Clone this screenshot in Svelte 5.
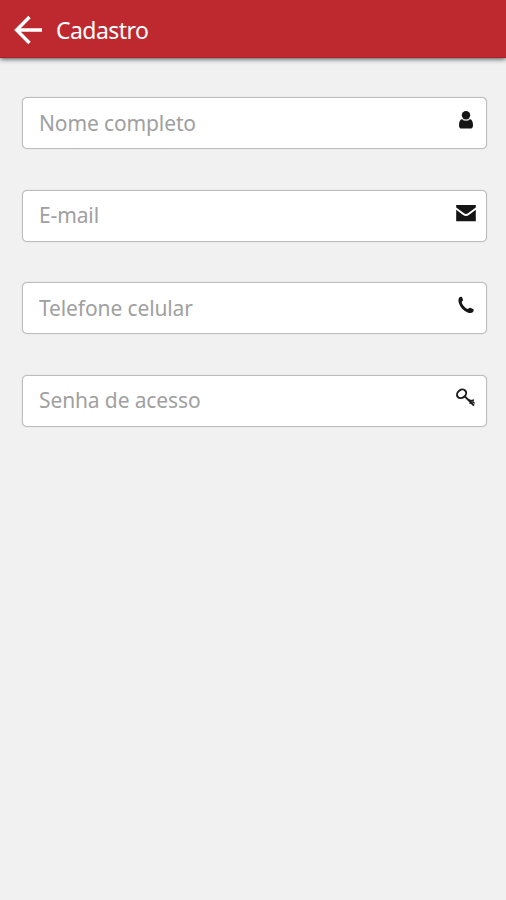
<script lang="ts">
    type Field = { id: string; type: string; label: string; icon: string };

    const fields: Field[] = [
        { id: 'name', type: 'text', label: 'Nome completo', icon: 'user' },
        { id: 'email', type: 'email', label: 'E-mail', icon: 'envelope' },
        { id: 'phone', type: 'tel', label: 'Telefone celular', icon: 'phone' },
        { id: 'password', type: 'password', label: 'Senha de acesso', icon: 'key' }
    ];

    let values = $state<Record<string, string>>({ name: '', email: '', phone: '', password: '' });

    function goBack() {
        history.back();
    }
</script>

<header>
    <button type="button" aria-label="Voltar" onclick={goBack}>
        <svg width="28" height="30" viewBox="0 0 28 30" fill="none" stroke="#fff" stroke-width="3.4">
            <path d="M15.500 2 2.600 15l12.900 13M3 15h25"/>
        </svg>
    </button>
    <h1>Cadastro</h1>
</header>

<form>
    {#each fields as field (field.id)}
        <div class="field">
            <input
                    type={field.type}
                    placeholder={field.label}
                    aria-label={field.label}
                    bind:value={values[field.id]}
            />
            <svg class="icon" width="22" height="22" viewBox="0 0 22 22" fill="#151515">
                {#if field.icon === 'user'}
                    <circle cx="11" cy="6.200" r="4.200"/>
                    <path d="M7 10c-1.900.8-3 2.600-3 6.200 0 2.300 1 3.400 2.600 3.400h8.800c1.600 0 2.600-1.100 2.600-3.400 0-3.600-1.100-5.400-3-6.200-2.300 2-5.700 2-8 0z"/>
                    <path d="M7.200 10.200c2.300 1.900 5.300 1.900 7.600 0" fill="none" stroke="#aaa" stroke-width=".8"/>
                {:else if field.icon === 'envelope'}
                    <path d="M1.200 3h19.600v2.400L13 11.300c-1.300.9-2.700.9-4 0L1.200 5.400z"/>
                    <path d="M1.200 7.700l6.900 5.400c1.900 1.300 3.900 1.300 5.800 0l6.900-5.400V19.200H1.200z"/>
                {:else if field.icon === 'phone'}
                    <path d="M4.300 3.400c.9-.7 1.800-.8 2.600-.5.500 1 .9 2 1.100 3.300-.1.900-1.400 1.200-1.300 2.200.8 2.700 3.200 5.400 5.900 6.500 1.100.3 1.500-1.200 2.500-1.100 1.400.4 2.500 1 3.500 1.800.2.900-.1 1.900-.8 2.600-1.500 1-3.300.9-5.200.2-4.500-1.800-7.600-5.200-8.800-9.600-.5-2.200-.5-4.100.5-5.400z"/>
                {:else}
                    <g fill="none" stroke="#1c1c1c">
                        <ellipse cx="6.600" cy="6.800" rx="4.900" ry="3.900" stroke-width="2" transform="rotate(-38 6.600 6.800)"/>
                        <path d="M9.800 9.400l9.200 9.200" stroke-width="2"/>
                        <path d="M14.600 16.800l2.200-2.200M13.500 12.500l2.500 1.200 2.300-.6-.5 2 1.900 1.200" stroke-width="1.300"/>
                    </g>
                {/if}
            </svg>
        </div>
    {/each}
</form>

<style>
    :global(body) {
        margin: 0;
        min-height: 100vh;
        background: #f1f1f1;
        font-family: "Noto Sans", "Open Sans", sans-serif;
    }

    header {
        display: flex;
        align-items: center;
        gap: 14px;
        height: 58px;
        padding: 1px 14px 0;
        box-sizing: border-box;
        background: #be292f;
        border-bottom: 1px solid #aa2228;
        box-shadow: 0 1px 5px rgba(0, 0, 0, 0.7);
        color: #fff;
    }

    header button {
        display: flex;
        padding: 2px 0 0;
        border: none;
        background: none;
        cursor: pointer;
    }

    h1 {
        margin: 2px 0 0;
        font-size: 23px;
        font-weight: 400;
        line-height: 30px;
        letter-spacing: -0.55px;
    }

    form {
        display: flex;
        flex-direction: column;
        gap: 40.5px;
        padding: 39px 19px 0 22px;
    }

    .field {
        position: relative;
        height: 52px;
    }

    input {
        display: block;
        width: 100%;
        height: 100%;
        box-sizing: border-box;
        padding: 0 50px 1px 16px;
        border: 1px solid #bdbdbd;
        border-radius: 5px;
        box-shadow: 0 0 1px #b5b5b5;
        background: #fff;
        color: #333;
        font: inherit;
        font-size: 21px;
        letter-spacing: -0.12px;
        outline: none;
    }

    input::placeholder {
        color: #a0a0a0;
        opacity: 1;
    }

    .icon {
        position: absolute;
        top: 12px;
        right: 10px;
        pointer-events: none;
    }
</style>
